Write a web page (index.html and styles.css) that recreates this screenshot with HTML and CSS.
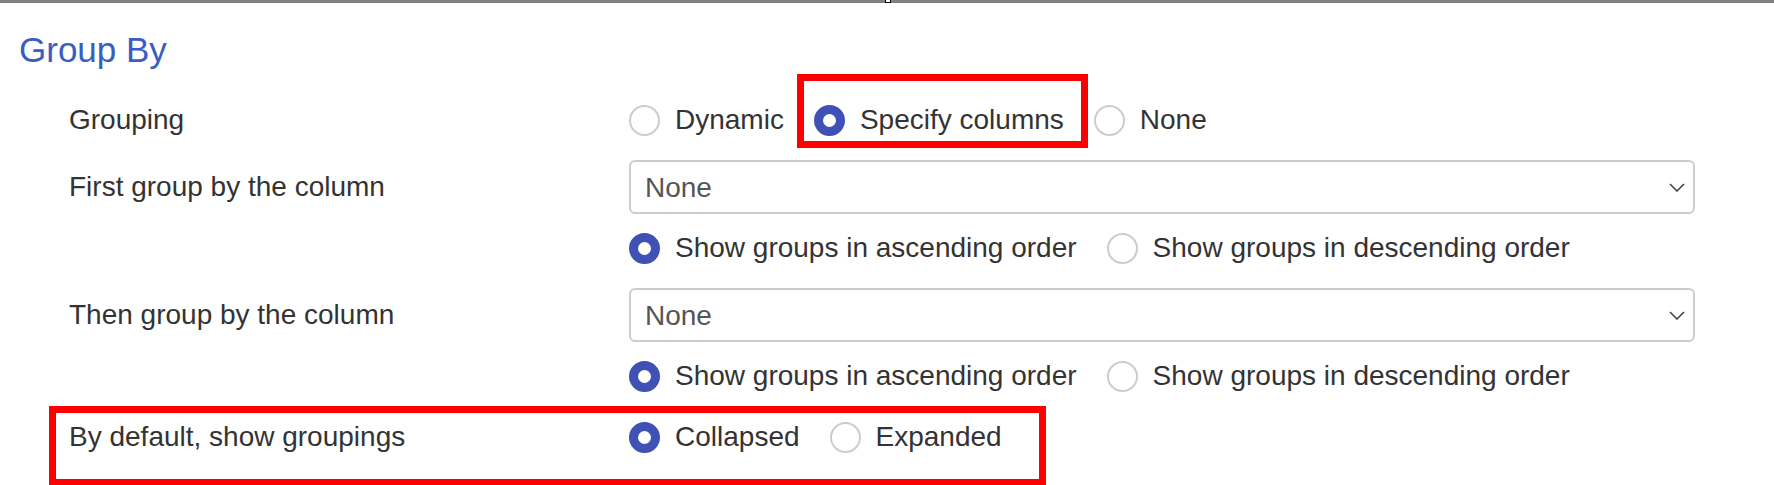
FILE: index.html
```html
<!DOCTYPE html>
<html lang="en">
<head>
    <meta charset="UTF-8">
    <meta name="viewport" content="width=device-width, initial-scale=1.0">
    <title>Group By</title>
    <link rel="stylesheet" href="styles.css">
</head>
<body>
    <div class="topbar"><span class="topbar-grip"></span></div>

    <section class="panel">
        <h2 class="panel-title">Group By</h2>

        <div class="fields">
            <div class="field">
                <div class="field-label">Grouping</div>
                <div class="field-control">
                    <div class="choices">
                        <label class="choice"><input type="radio" name="grouping">Dynamic</label>
                        <label class="choice is-marked"><input type="radio" name="grouping" checked>Specify columns</label>
                        <label class="choice"><input type="radio" name="grouping">None</label>
                    </div>
                </div>
            </div>

            <div class="field">
                <div class="field-label for-select">First group by the column</div>
                <div class="field-control">
                    <div class="select-wrap">
                        <select class="select">
                            <option>None</option>
                        </select>
                        <svg class="chevron" width="16" height="9" viewBox="0 0 16 9">
                            <polyline points="1,1 8,8 15,1" fill="none" stroke="#444" stroke-width="1.6"/>
                        </svg>
                    </div>
                    <div class="choices">
                        <label class="choice"><input type="radio" name="order1" checked>Show groups in ascending order</label>
                        <label class="choice"><input type="radio" name="order1">Show groups in descending order</label>
                    </div>
                </div>
            </div>

            <div class="field">
                <div class="field-label for-select">Then group by the column</div>
                <div class="field-control">
                    <div class="select-wrap">
                        <select class="select">
                            <option>None</option>
                        </select>
                        <svg class="chevron" width="16" height="9" viewBox="0 0 16 9">
                            <polyline points="1,1 8,8 15,1" fill="none" stroke="#444" stroke-width="1.6"/>
                        </svg>
                    </div>
                    <div class="choices">
                        <label class="choice"><input type="radio" name="order2" checked>Show groups in ascending order</label>
                        <label class="choice"><input type="radio" name="order2">Show groups in descending order</label>
                    </div>
                </div>
            </div>

            <div class="field is-marked">
                <div class="field-label">By default, show groupings</div>
                <div class="field-control">
                    <div class="choices">
                        <label class="choice"><input type="radio" name="collapse" checked>Collapsed</label>
                        <label class="choice"><input type="radio" name="collapse">Expanded</label>
                    </div>
                </div>
            </div>
        </div>
    </section>
</body>
</html>
```

FILE: styles.css
```css
*,
*::before,
*::after {
    box-sizing: border-box;
}

body {
    margin: 0;
    font-family: 'Liberation Sans', Arial, sans-serif;
    font-size: 28px;
    color: #333;
    background: #fff;
}

.topbar {
    height: 3px;
    background: #808080;
    position: relative;
}

.topbar-grip {
    position: absolute;
    left: 885px;
    top: 0;
    width: 6px;
    height: 3px;
    background: #fff;
    border: 1px solid #000;
    border-top: none;
}

.panel {
    padding-top: 27px;
    padding-bottom: 28px;
}

.panel-title {
    margin: 0 0 0 19px;
    font-size: 35px;
    line-height: 40px;
    font-weight: normal;
    color: #3a5dc4;
}

.fields {
    display: flex;
    flex-direction: column;
    gap: 20px;
    margin-top: 30px;
    padding-left: 69px;
}

.field {
    display: flex;
    align-items: flex-start;
}

.field-label {
    width: 560px;
    flex: none;
    line-height: 40px;
}

.field-label.for-select {
    padding-top: 7px;
}

.field-control {
    width: 1066px;
    display: flex;
    flex-direction: column;
    gap: 14px;
}

/* select */
.select-wrap {
    position: relative;
}

.select {
    appearance: none;
    -webkit-appearance: none;
    width: 100%;
    height: 54px;
    padding: 0 44px 0 14px;
    font-family: inherit;
    font-size: 28px;
    color: #555;
    background: #fff;
    border: 2px solid #ccc;
    border-radius: 6px;
    outline: none;
}

.chevron {
    position: absolute;
    right: 10px;
    top: 23px;
    pointer-events: none;
}

/* radios */
.choices {
    display: flex;
    align-items: center;
    height: 40px;
}

.choice {
    display: flex;
    align-items: center;
    gap: 15px;
    margin-right: 30px;
    line-height: 40px;
    white-space: nowrap;
}

.choice input {
    appearance: none;
    -webkit-appearance: none;
    flex: none;
    width: 31px;
    height: 31px;
    margin: 0;
    border: 2px solid #ccc;
    border-radius: 50%;
    background: #fff;
}

.choice input:checked {
    border: 9px solid #3f51b5;
}

/* red annotation boxes */
.choice.is-marked {
    position: relative;
    margin-right: 30px;
}

.choice.is-marked::after {
    content: '';
    position: absolute;
    left: -17px;
    right: -24px;
    top: -26px;
    bottom: -8px;
    border: 7px solid #f00;
    pointer-events: none;
}

.field.is-marked {
    position: relative;
    margin-top: 1px;
}

.field.is-marked::after {
    content: '';
    position: absolute;
    left: -20px;
    width: 997px;
    top: -11px;
    bottom: -29px;
    border: 7px solid #f00;
    pointer-events: none;
}
```
